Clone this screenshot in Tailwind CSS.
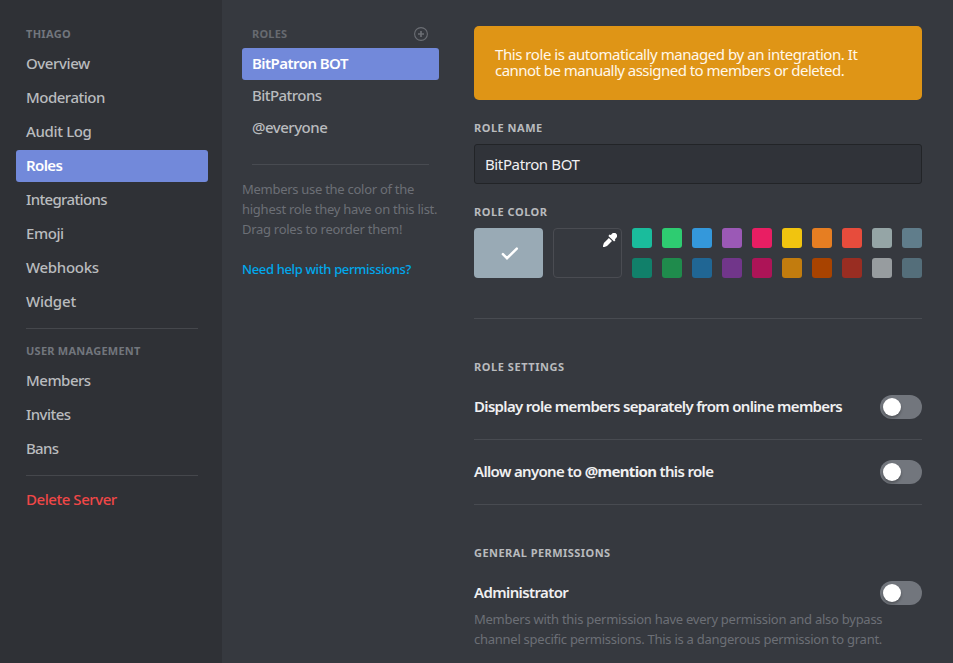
<!DOCTYPE html>
<html lang="en">
<head>
<meta charset="utf-8">
<title>Server Settings</title>
<script src="https://cdn.jsdelivr.net/npm/@tailwindcss/browser@4"></script>
</head>
<body class="flex h-screen w-screen overflow-hidden bg-[#36393f] font-['Noto_Sans',sans-serif] text-[15px] text-[#b9bbbe]">
  <nav class="flex w-[222px] shrink-0 flex-col bg-[#2f3136] pt-6 pr-3.5 pl-4 whitespace-nowrap">
    <h2 class="mb-1 h-5 px-2.5 text-[11px] leading-5 font-bold text-[#72767d]"><span class="tracking-[0.3px]">THIAGO</span></h2>
    <div class="flex flex-col gap-0.5 leading-[30px] font-medium">
      <a class="h-8 rounded-[3px] px-2.5 tracking-[-0.4px]">Overview</a>
      <a class="h-8 rounded-[3px] px-2.5 tracking-[-0.5px]">Moderation</a>
      <a class="h-8 rounded-[3px] px-2.5 tracking-[-0.35px]">Audit Log</a>
      <a class="h-8 rounded-[3px] bg-[#7289da] px-2.5 font-semibold tracking-[-0.6px] text-white">Roles</a>
      <a class="h-8 rounded-[3px] px-2.5 tracking-[-0.65px]">Integrations</a>
      <a class="h-8 rounded-[3px] px-2.5 tracking-[-0.45px]">Emoji</a>
      <a class="h-8 rounded-[3px] px-2.5 tracking-[-0.3px]">Webhooks</a>
      <a class="h-8 rounded-[3px] px-2.5 tracking-[-0.2px]">Widget</a>
    </div>
    <div class="mx-2.5 mt-2.5 h-px bg-[#45474c]"></div>
    <h2 class="mt-3 mb-1 h-5 px-2.5 text-[11px] leading-5 font-bold text-[#72767d]"><span class="tracking-[0.25px]">USER MANAGEMENT</span></h2>
    <div class="flex flex-col gap-0.5 leading-[30px] font-medium">
      <a class="h-8 px-2.5 tracking-[-0.5px]">Members</a>
      <a class="h-8 px-2.5 tracking-[-0.55px]">Invites</a>
      <a class="h-8 px-2.5 tracking-[-0.7px]">Bans</a>
    </div>
    <div class="mx-2.5 mt-2.5 h-px bg-[#45474c]"></div>
    <a class="mt-2 h-8 px-2.5 leading-[30px] font-medium tracking-[-0.45px] text-[#f04747]">Delete Server</a>
  </nav>

  <section class="ml-5 flex w-[197px] shrink-0 flex-col pt-6 whitespace-nowrap">
    <div class="mb-1 flex h-5 items-center justify-between px-2.5">
      <h2 class="text-[11px] leading-5 font-bold text-[#676a70]"><span class="tracking-[0.2px]">ROLES</span></h2>
      <svg class="size-4" viewBox="0 0 16 16" fill="none" stroke="#6b6e74"><circle cx="8" cy="8" r="6.4" stroke-width="1.1"/><path d="M8 5v6M5 8h6" stroke-width="1.7"/></svg>
    </div>
    <a class="h-8 rounded-[3px] bg-[#7289da] px-2.5 leading-[30px] font-semibold tracking-[-0.55px] text-white">BitPatron BOT</a>
    <a class="h-8 px-2.5 leading-[30px] font-medium tracking-[-0.55px]">BitPatrons</a>
    <a class="h-8 px-2.5 leading-[30px] font-medium tracking-[-0.5px]">@everyone</a>
    <div class="mx-2.5 mt-5 mb-3.5 h-px bg-[#484b51]"></div>
    <p class="text-[13px] leading-5 text-[#6c6f76]"><span class="tracking-[-0.28px]">Members use the color of the</span><br><span class="tracking-[-0.26px]">highest role they have on this list.</span><br><span class="tracking-[-0.28px]">Drag roles to reorder them!</span></p>
    <a class="mt-5 text-[13px] leading-5 font-medium text-[#00a8ec]"><span class="tracking-[-0.36px]">Need help with permissions?</span></a>
  </section>

  <main class="ml-[35px] flex w-[448px] shrink-0 flex-col pt-[26px] whitespace-nowrap">
    <div class="h-[74px] rounded-[5px] bg-[#df9516] px-[21px] pt-5 leading-4 text-[#fff8ea]"><span class="tracking-[-0.44px]">This role is automatically managed by an integration. It</span><br><span class="tracking-[-0.53px]">cannot be manually assigned to members or deleted.</span></div>
    <h2 class="mt-[18px] h-5 text-[11px] leading-5 font-bold"><span class="tracking-[0.5px]">ROLE NAME</span></h2>
    <div class="mt-1.5 h-10 rounded-[3px] border border-[#222427] bg-[#303339] px-2.5 leading-[38px] text-[#f0f0f1]"><span class="tracking-[-0.38px]">BitPatron BOT</span></div>
    <h2 class="mt-[18px] h-5 text-[11px] leading-5 font-bold"><span class="tracking-[0.5px]">ROLE COLOR</span></h2>
    <div class="mt-1.5 flex gap-2.5">
      <div class="flex h-[50px] w-[69px] items-center justify-center rounded-[4px] bg-[#99aab5]">
        <svg class="mt-px ml-0.5 h-[14px] w-[18px]" viewBox="0 0 18 14" fill="none" stroke="#fff" stroke-width="2.5" stroke-linecap="round"><path d="M1.9 7.2 6 11.2 15.8 1.6"/></svg>
      </div>
      <div class="flex h-[50px] w-[69px] justify-end rounded-[4px] border border-[#4a4c52] pt-1 pr-1">
        <svg class="size-[14px]" viewBox="0 0 14 14" fill="#fff"><path d="M13.2.8a2.9 2.9 0 0 0-4.2 0L7.8 2 6.6 1.6 5.4 2.9l5.7 5.7 1.3-1.3-.5-1.1 1.3-1.3a2.9 2.9 0 0 0 0-4.1ZM5.9 5 .9 10 .1 12.6a.9.9 0 0 0 1.3 1.3L4 13.1l5-5Z"/></svg>
      </div>
      <div class="grid grid-cols-10 gap-2.5">
        <i class="size-5 rounded-[3px] bg-[#1abc9c]"></i><i class="size-5 rounded-[3px] bg-[#2ecc71]"></i><i class="size-5 rounded-[3px] bg-[#3498db]"></i><i class="size-5 rounded-[3px] bg-[#9b59b6]"></i><i class="size-5 rounded-[3px] bg-[#e91e63]"></i><i class="size-5 rounded-[3px] bg-[#f1c40f]"></i><i class="size-5 rounded-[3px] bg-[#e67e22]"></i><i class="size-5 rounded-[3px] bg-[#e74c3c]"></i><i class="size-5 rounded-[3px] bg-[#95a5a6]"></i><i class="size-5 rounded-[3px] bg-[#607d8b]"></i>
        <i class="size-5 rounded-[3px] bg-[#11806a]"></i><i class="size-5 rounded-[3px] bg-[#1f8b4c]"></i><i class="size-5 rounded-[3px] bg-[#206694]"></i><i class="size-5 rounded-[3px] bg-[#71368a]"></i><i class="size-5 rounded-[3px] bg-[#ad1457]"></i><i class="size-5 rounded-[3px] bg-[#c27c0e]"></i><i class="size-5 rounded-[3px] bg-[#a84300]"></i><i class="size-5 rounded-[3px] bg-[#992d22]"></i><i class="size-5 rounded-[3px] bg-[#979c9f]"></i><i class="size-5 rounded-[3px] bg-[#546e7a]"></i>
      </div>
    </div>
    <div class="mt-10 h-px shrink-0 bg-[#484b51]"></div>
    <h2 class="mt-[38px] h-5 text-[11px] leading-5 font-bold"><span class="tracking-[0.55px]">ROLE SETTINGS</span></h2>
    <div class="mt-[18px] flex h-6 shrink-0 items-center justify-between leading-[22px] font-semibold text-[#f0f0f1]">
      <span class="pb-0.5 tracking-[-0.67px]">Display role members separately from online members</span>
      <span class="h-6 w-[42px] rounded-full bg-[#72767d] p-[3px]"><i class="block size-[18px] rounded-full bg-white shadow-[0_2px_3px_rgba(0,0,0,0.3)]"></i></span>
    </div>
    <div class="mt-5 h-px shrink-0 bg-[#484b51]"></div>
    <div class="mt-5 flex h-6 shrink-0 items-center justify-between leading-[22px] font-semibold text-[#f0f0f1]">
      <span class="pb-0.5 tracking-[-0.66px]">Allow anyone to <b class="font-bold">@mention</b> this role</span>
      <span class="h-6 w-[42px] rounded-full bg-[#72767d] p-[3px]"><i class="block size-[18px] rounded-full bg-white shadow-[0_2px_3px_rgba(0,0,0,0.3)]"></i></span>
    </div>
    <div class="mt-5 h-px shrink-0 bg-[#484b51]"></div>
    <h2 class="mt-[38px] h-5 shrink-0 text-[11px] leading-5 font-bold"><span class="tracking-[0.45px]">GENERAL PERMISSIONS</span></h2>
    <div class="mt-[18px] flex h-6 shrink-0 items-center justify-between leading-[22px] font-semibold text-[#f0f0f1]">
      <span class="pb-0.5 tracking-[-0.62px]">Administrator</span>
      <span class="h-6 w-[42px] rounded-full bg-[#72767d] p-[3px]"><i class="block size-[18px] rounded-full bg-white shadow-[0_2px_3px_rgba(0,0,0,0.3)]"></i></span>
    </div>
    <p class="mt-1 text-[13px] leading-5 text-[#6c6f76]"><span class="tracking-[-0.26px]">Members with this permission have every permission and also bypass</span><br><span class="tracking-[-0.26px]">channel specific permissions. This is a dangerous permission to grant.</span></p>
  </main>
</body>
</html>
